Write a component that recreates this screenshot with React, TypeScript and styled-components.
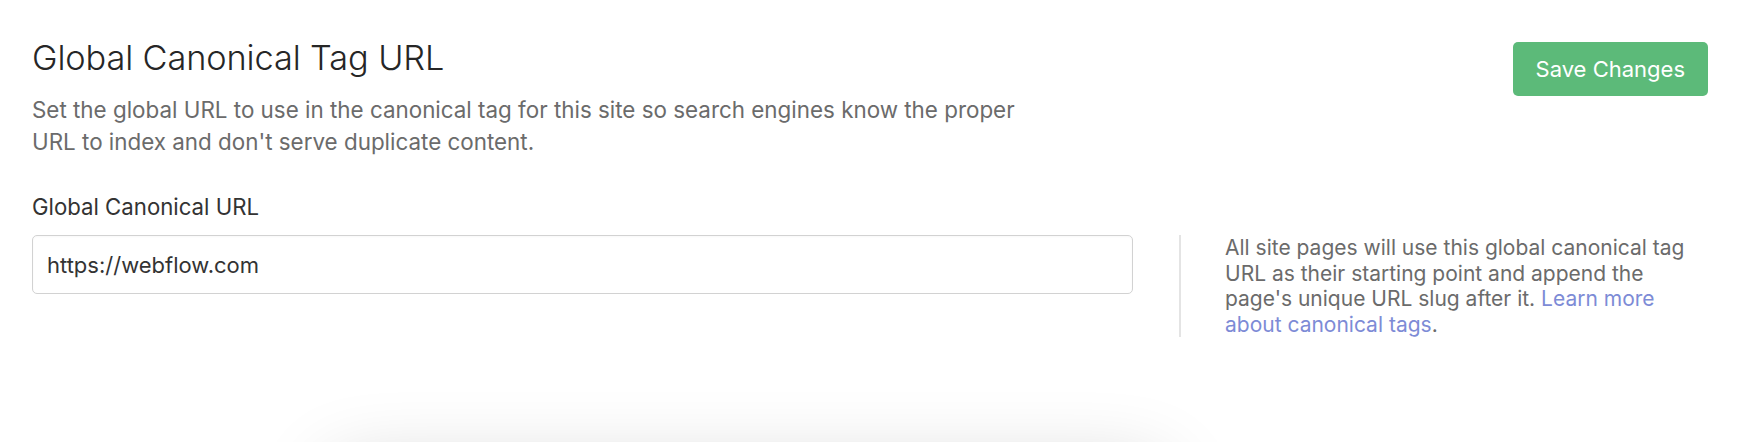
import React from "react";
import styled, { createGlobalStyle } from "styled-components";

const GlobalStyle = createGlobalStyle`
  html, body {
    margin: 0;
    padding: 0;
    background: #ffffff;
    overflow: hidden;
  }
  body {
    font-family: Inter, "Noto Sans", "Liberation Sans", sans-serif;
    -webkit-font-smoothing: antialiased;
  }
`;

const Page = styled.div`
  padding: 37px 34px 0 32px;
  box-sizing: border-box;
  width: 1742px;
`;

const Header = styled.header`
  display: flex;
  justify-content: space-between;
  align-items: flex-start;
`;

const Intro = styled.div`
  display: flex;
  flex-direction: column;
  gap: 16px;
`;

const Title = styled.h1`
  margin: 0;
  font-size: 34.3px;
  line-height: 41px;
  font-weight: 300;
  color: #262626;
  letter-spacing: -0.1px;
`;

const Description = styled.p`
  margin: 0;
  max-width: 1000px;
  font-size: 22.4px;
  line-height: 32px;
  color: #6b6b6b;
`;

const SaveButton = styled.button`
  margin-top: 5px;
  height: 54px;
  padding: 0 23px;
  border: none;
  border-radius: 5px;
  background: #5cba79;
  color: #ffffff;
  font-family: inherit;
  font-size: 22px;
  font-weight: 400;
  cursor: pointer;
`;

const Field = styled.section`
  margin-top: 35px;
  display: flex;
  flex-direction: column;
  gap: 14px;
`;

const Label = styled.label`
  font-size: 22.2px;
  line-height: 28px;
  color: #333333;
`;

const Row = styled.div`
  display: flex;
  align-items: flex-start;
  gap: 46px;
`;

const Input = styled.input`
  flex: 1;
  min-width: 0;
  height: 59px;
  box-sizing: border-box;
  padding: 0 14px;
  border: 1px solid #d2d2d2;
  border-radius: 5px;
  font-family: inherit;
  font-size: 22px;
  color: #333333;
  background: #ffffff;
  outline: none;
  box-shadow: inset 0 1px 2px rgba(0, 0, 0, 0.03);
`;

const Aside = styled.aside`
  flex: 0 0 529px;
  box-sizing: border-box;
  border-left: 2px solid #e4e4e4;
  padding: 0 13px 0 44px;
  font-size: 21px;
  line-height: 25.5px;
  color: #6b6b6b;
`;

const HelpLink = styled.a`
  color: #7d8bd6;
  text-decoration: none;
`;

const ShadowCard = styled.div`
  margin: 132px 0 0 300px;
  width: 830px;
  height: 120px;
  background: #ffffff;
  border-radius: 8px;
  box-shadow: 0 0 80px rgba(0, 0, 0, 0.2);
`;

export default function App() {
  return (
    <>
      <GlobalStyle />
      <Page>
        <Header>
          <Intro>
            <Title>Global Canonical Tag URL</Title>
            <Description>
              Set the global URL to use in the canonical tag for this site so
              search engines know the proper URL to index and don't serve
              duplicate content.
            </Description>
          </Intro>
          <SaveButton>Save Changes</SaveButton>
        </Header>
        <Field>
          <Label htmlFor="canonical">Global Canonical URL</Label>
          <Row>
            <Input id="canonical" defaultValue="https://webflow.com" />
            <Aside>
              All site pages will use this global canonical tag URL as their
              starting point and append the page's unique URL slug after it.{" "}
              <HelpLink href="#">Learn more about canonical tags</HelpLink>.
            </Aside>
          </Row>
        </Field>
        <ShadowCard />
      </Page>
    </>
  );
}
